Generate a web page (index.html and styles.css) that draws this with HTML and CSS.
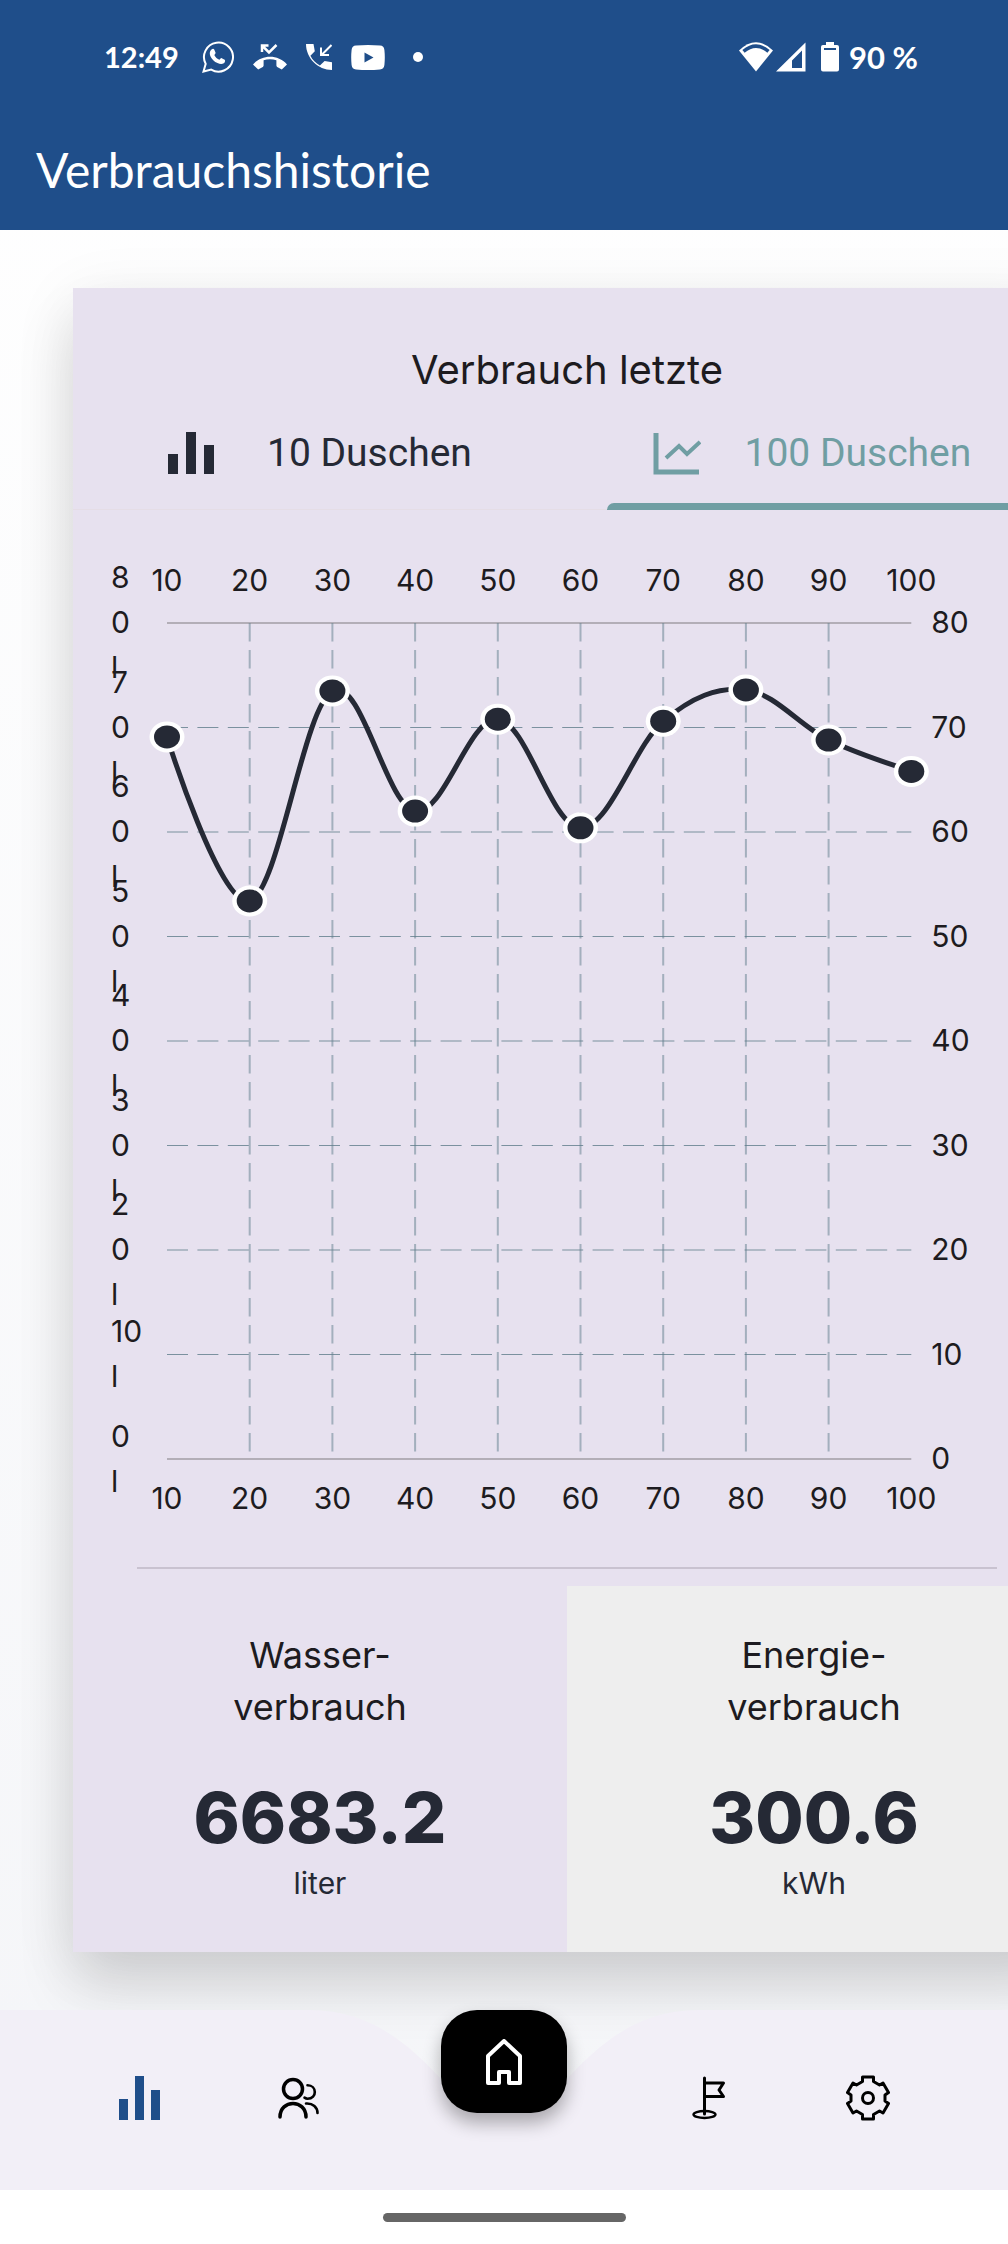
FILE: index.html
```html
<!DOCTYPE html>
<html lang="de">
<head>
    <meta charset="UTF-8">
    <meta name="viewport" content="width=device-width, initial-scale=1.0">
    <title>Verbrauchshistorie</title>
    <link rel="stylesheet" href="styles.css">
</head>
<body>
    <header class="header">
        <div class="status">
            <span class="time">12:49</span>
            <div class="notifications">
                <svg width="32" height="32" viewBox="0 0 32 32" fill="none" stroke="#fff" stroke-width="2">
                    <path d="M1.5 30.5l2.2-7.6A14.5 14.5 0 1 1 9.2 28.600z"/>
                    <path fill="#fff" stroke="none" d="M9.500 8.500c1.200-1 2.300-.8 2.700.1l1.300 3c.2.600-.1 1.200-1.200 2.500 1 2.200 3 3.900 5.200 4.700 1.200-1.500 1.600-1.900 2.200-1.600l3 1.500c.8.500.4 2.600-.9 3.500-1.800 1.200-4 .9-6.300-.1-3.200-1.400-5.800-4-7.200-7.200-1-2.500-.5-4.900 1.200-6.400z"/>
                </svg>
                <svg width="34" height="26" viewBox="0 0 34 26" fill="#fff">
                    <path d="M0 20.500C9 10.300 25 10.300 34 20.500l-5.200 5.100c-1.600-1-3-1.900-4.600-2.700-.5-.3-.8-.8-.8-1.400v-5.200c-4.200-1.300-8.600-1.300-12.800 0v5.200c0 .6-.3 1.100-.8 1.400-1.600.8-3.100 1.700-4.600 2.700z"/>
                    <path d="M10 9V2.500h6.500M11 3.500l6 6 7.500-7.500" transform="translate(-1 -1)" fill="none" stroke="#fff" stroke-width="2.500"/>
                </svg>
                <svg width="26" height="26" viewBox="0 0 26 26" fill="#fff">
                    <path d="M0 0h7.500l1.300 7.200-4.400 4.600c2 4 5.300 7.400 9.500 9.600l4.700-4.400 7.400 1.300V26C12 26 0 14 0 0z"/>
                    <path d="M25.500 1L15.500 11M15 3.500v7.500h8" fill="none" stroke="#fff" stroke-width="2"/>
                </svg>
                <svg width="34" height="25" viewBox="0 0 34 25">
                    <path fill="#fff" d="M5 .6Q17-.6 29 .6q4 .2 4.400 4.400.8 7.500 0 15-.4 4.200-4.400 4.400-12 1-24 0Q1 24.200.6 20q-.8-7.500 0-15Q1 .8 5 .6z"/>
                    <path fill="#1f4e8a" d="M13.500 7.500v10l9-5z"/>
                </svg>
                <i class="more"></i>
            </div>
            <div class="system">
                <svg width="34" height="30" viewBox="0 0 34 30">
                    <path fill="#fff" d="M0 8.500Q17-8 34 8.500L17 29.500z"/>
                    <path fill="none" stroke="#1f4e8a" stroke-width="3.500" d="M4.500 9.300Q17-1 29.500 9.300"/>
                </svg>
                <svg class="signal" width="30" height="30" viewBox="0 0 30 30">
                    <path fill="#fff" fill-rule="evenodd" d="M29.500.5V29.500H0zM26 8.500l-10 10V26h10z"/>
                </svg>
                <svg class="battery" width="18" height="30" viewBox="0 0 18 30">
                    <path fill="#fff" d="M5 0h8v3h3q2 0 2 2v22.500q0 2-2 2H2q-2 0-2-2V5q0-2 2-2h3z"/>
                    <path fill="#1f4e8a" d="M3 6h12v2H3z"/>
                </svg>
                <span>90 %</span>
            </div>
        </div>
        <h1>Verbrauchshistorie</h1>
    </header>

    <main>
        <section class="card">
            <h2>Verbrauch letzte</h2>
            <div class="tabs" role="tablist">
                <button class="tab" role="tab" aria-selected="false">
                    <svg width="48" height="44" viewBox="0 0 48 44" fill="currentColor">
                        <path d="M1 23h10v20H1zM19 1h10v42H19zM37 14h10v29H37z"/>
                    </svg>
                    10 Duschen
                </button>
                <button class="tab active" role="tab" aria-selected="true">
                    <svg width="48" height="44" viewBox="0 0 48 44" fill="none" stroke="currentColor">
                        <path stroke-width="5" d="M3 2v39h43"/>
                        <path stroke-width="4" d="M13 27l13-12 8 8 13-12"/>
                    </svg>
                    100 Duschen
                </button>
            </div>

            <svg class="chart" id="chart" viewBox="0 0 988 1057"></svg>

            <hr>
            <div class="totals">
                <div class="total">
                    <h3>Wasser-<br>verbrauch</h3>
                    <strong>6683.2</strong>
                    <span>liter</span>
                </div>
                <div class="total energy">
                    <h3>Energie-<br>verbrauch</h3>
                    <strong>300.6</strong>
                    <span>kWh</span>
                </div>
            </div>
        </section>
    </main>

    <nav class="nav">
        <svg class="nav-shape" viewBox="0 0 1008 180" preserveAspectRatio="none">
            <path fill="#f2eff7" d="M0 0H310C367 0 405 30 441 69Q470 100 504 100T567 69C603 30 641 0 698 0H1008V180H0z"/>
        </svg>
        <a class="nav-item" href="#" aria-label="Historie">
            <svg width="42" height="44" viewBox="0 0 42 44" fill="#1f4e8a">
                <path d="M0 23h9v21H0zM16 0h9v44h-9zM32 14h9v30h-9z"/>
            </svg>
        </a>
        <a class="nav-item" href="#" aria-label="Personen">
            <svg width="42" height="44" viewBox="0 0 42 44" fill="none" stroke="#000" stroke-width="3.500" stroke-linecap="round">
                <circle cx="15" cy="13" r="9.500"/>
                <path d="M2 41c0-18 26-18 26 0"/>
                <path stroke-width="2.600" d="M29.500 9.200c9.500 0 10 13.500 0 13.500q-1.500 0-3-1M28 27.500c7-.5 11.500 4 11.500 9.500"/>
            </svg>
        </a>
        <a class="home" href="#" aria-label="Start">
            <svg width="36" height="46" viewBox="0 0 36 46" fill="none" stroke="#fff" stroke-width="4" stroke-linejoin="round">
                <path d="M2 44V17L18 2l16 15v27H23V33H13v11z"/>
            </svg>
        </a>
        <a class="nav-item" href="#" aria-label="Ziele">
            <svg width="34" height="44" viewBox="0 0 34 44" fill="none" stroke="#000" stroke-width="3" stroke-linecap="round" stroke-linejoin="round">
                <path d="M12.500 2v36M12.500 7h19l-4.500 7 4.500 6.500h-19"/>
                <ellipse cx="12.500" cy="38.500" rx="11" ry="3.500" stroke-width="2.400"/>
            </svg>
        </a>
        <a class="nav-item" href="#" aria-label="Einstellungen">
            <svg width="44" height="46" viewBox="0 0 44 46" fill="none" stroke="#000" stroke-width="3" stroke-linejoin="round">
                <path d="M16.500 2h11v4.500l6 3.500 3.500-2L42.500 17.500 39 20v6l3.500 2.500L37 38l-3.500-2-6 3.500V44h-11v-4.500l-6-3.500L7 38 1.500 28.500 5 26v-6l-3.500-2.500L7 8l3.500 2 6-3.500z"/>
                <circle cx="22" cy="23" r="5.500"/>
            </svg>
        </a>
    </nav>
    <footer class="gesture"><i></i></footer>

    <script>
        const chart = document.getElementById('chart');
        const left = 94, top0 = 113, stepX = 82.7, stepY = 104.5;
        const points = [69.1, 53.4, 73.5, 62, 70.8, 60.4, 70.6, 73.6, 68.8, 65.8];

        function add(tag, attrs, text){
            const el = document.createElementNS('http://www.w3.org/2000/svg', tag);
            for(const key in attrs) el.setAttribute(key, attrs[key]);
            if(text !== undefined) el.textContent = text;
            chart.append(el);
        }

        const right = left + stepX * 9;
        const bottom = top0 + stepY * 8;

        // grid
        for(let i = 0; i <= 8; i++){
            const y = top0 + stepY * i;
            const edge = i === 0 || i === 8;
            add('line', {x1: left, x2: right, y1: y, y2: y, class: edge ? 'edge' : 'grid-h'});
        }
        for(let i = 1; i < 9; i++){
            const x = left + stepX * i;
            add('line', {x1: x, x2: x, y1: top0, y2: bottom, class: 'grid-v'});
        }

        // labels
        for(let i = 0; i < 10; i++){
            const x = left + stepX * i;
            const label = (i + 1) * 10;
            add('text', {x: x, y: 81, class: 'mid'}, label);
            add('text', {x: x, y: bottom + 50, class: 'mid'}, label);
        }
        for(let i = 0; i <= 8; i++){
            const y = top0 + stepY * i + 10;
            const value = 80 - i * 10;
            add('text', {x: right + 20, y: y}, value);
            const lines = value > 10 ? [value / 10, 0, 'l'] : [value, 'l'];
            const start = y - (lines.length - 1) * 22.5;
            lines.forEach((line, n) => add('text', {x: 38, y: start + n * 45}, line));
        }

        // curve
        const pts = points.map((v, i) => [left + stepX * i, top0 + (80 - v) / 10 * stepY]);
        const tangent = (i, k) => {
            const prev = pts[Math.max(i - 1, 0)];
            const next = pts[Math.min(i + 1, pts.length - 1)];
            return i === 0 ? 0 : (next[k] - prev[k]) / 2 * 0.35;
        };
        let d = 'M' + pts[0];
        for(let i = 1; i < pts.length; i++){
            const a = pts[i - 1], b = pts[i];
            d += ` C${a[0] + tangent(i - 1, 0)} ${a[1] + tangent(i - 1, 1)}`;
            d += ` ${b[0] - tangent(i, 0)} ${b[1] - tangent(i, 1)} ${b[0]} ${b[1]}`;
        }
        add('path', {d: d, class: 'curve'});
        pts.forEach(p => {
            add('ellipse', {cx: p[0], cy: p[1], rx: 17.5, ry: 15.5, fill: '#fff'});
            add('ellipse', {cx: p[0], cy: p[1], rx: 13, ry: 11.5, fill: '#252935'});
        });
    </script>
</body>
</html>
```
FILE: styles.css
```css
*{
    box-sizing: border-box;
}
body{
    margin: 0;
    font-family: Inter, "Open Sans", sans-serif;
    color: #1d1b20;
    background: linear-gradient(#fff, #f4f5f8);
}
h1, h2, h3{
    margin: 0;
    font-weight: 400;
}

/* header */
.header{
    height: 230px;
    background-color: #1f4e8a;
    color: #fff;
}
.status{
    display: flex;
    align-items: center;
    height: 114px;
    padding: 0 90px 0 104px;
    font: 700 31px/36px Lato, sans-serif;
}
.time{
    font-size: 29px;
}
.notifications{
    display: flex;
    align-items: center;
    gap: 19px;
    margin-left: 23px;
}
.more{
    width: 10px;
    height: 10px;
    margin-left: 9px;
    border-radius: 50%;
    background-color: #fff;
}
.system{
    display: flex;
    align-items: center;
    margin-left: auto;
}
.signal{
    margin-left: 3px;
}
.battery{
    margin: 0 10px 0 15px;
}
.header h1{
    padding-left: 36px;
    font: 400 48px/112px Lato, sans-serif;
}

/* card */
main{
    padding: 58px 0 58px 73px;
    overflow-x: clip;
}
.card{
    width: calc(100% + 53px);
    padding-top: 54px;
    background-color: #e7e1ef;
    box-shadow: 0 36px 54px rgba(0, 0, 0, 0.12), 0 12px 60px rgba(0, 0, 0, 0.08);
}
.card h2{
    text-align: center;
    font-size: 40px;
    line-height: 56px;
}
.tabs{
    display: grid;
    grid-template-columns: 54% 46%;
    height: 112px;
    border-bottom: 1px solid #e5dde6;
}
.tab{
    position: relative;
    display: flex;
    align-items: center;
    gap: 52px;
    height: 112px;
    padding: 0 0 3px 94px;
    border: 0;
    background: none;
    color: #252935;
    font: 400 39px/44px Roboto, sans-serif;
    white-space: nowrap;
}
.tab.active{
    gap: 44px;
    padding-left: 46px;
    color: #709ea3;
}
.tab.active::after{
    content: "";
    position: absolute;
    left: 0;
    right: 0;
    bottom: 0;
    height: 7px;
    border-top-left-radius: 7px;
    background-color: #709ea3;
}
.chart{
    display: block;
    width: 100%;
}
.chart text{
    font-size: 30px;
    fill: #1d1b20;
}
.chart .mid{
    text-anchor: middle;
}
.edge{
    stroke: #b3aeb7;
    stroke-width: 2;
}
.grid-h, .grid-v{
    stroke: #607d8b;
    stroke-opacity: 0.8;
    stroke-width: 1;
    stroke-dasharray: 21 9.4;
}
.grid-v{
    stroke-opacity: 0.5;
    stroke-width: 2;
    stroke-dasharray: 18.5 8.5;
}
.curve{
    fill: none;
    stroke: #252935;
    stroke-width: 5;
}
hr{
    height: 2px;
    margin: 0 64px 17px;
    border: 0;
    background-color: #c9c2d0;
}

/* totals */
.totals{
    display: grid;
    grid-template-columns: 1fr 1fr;
}
.total{
    display: flex;
    flex-direction: column;
    align-items: center;
    padding: 43px 0 44px;
    text-align: center;
}
.energy{
    background-color: #eee;
}
.total h3{
    font-size: 36px;
    line-height: 52px;
}
.total strong{
    margin-top: 45px;
    color: #252935;
    font-size: 70px;
    font-weight: 800;
    line-height: 80px;
}
.total span{
    color: #252935;
    font-size: 30px;
    line-height: 50px;
}

/* bottom bar */
.nav{
    position: relative;
    display: flex;
    align-items: center;
    height: 180px;
    padding: 0 61px 4px;
}
.nav-shape{
    position: absolute;
    top: 0;
    left: 0;
    width: 100%;
    height: 100%;
}
.nav-item{
    position: relative;
    flex: 1;
    display: flex;
    justify-content: center;
}
.home{
    position: relative;
    display: flex;
    align-items: center;
    justify-content: center;
    align-self: flex-start;
    width: 126px;
    height: 103px;
    margin: 0 63px;
    border-radius: 36px;
    background-color: #000;
    box-shadow: 0 10px 18px rgba(0, 0, 0, 0.3);
}
.gesture{
    display: flex;
    align-items: center;
    justify-content: center;
    height: 54px;
    background-color: #fff;
}
.gesture i{
    width: 243px;
    height: 9px;
    border-radius: 5px;
    background-color: #666;
}
```
